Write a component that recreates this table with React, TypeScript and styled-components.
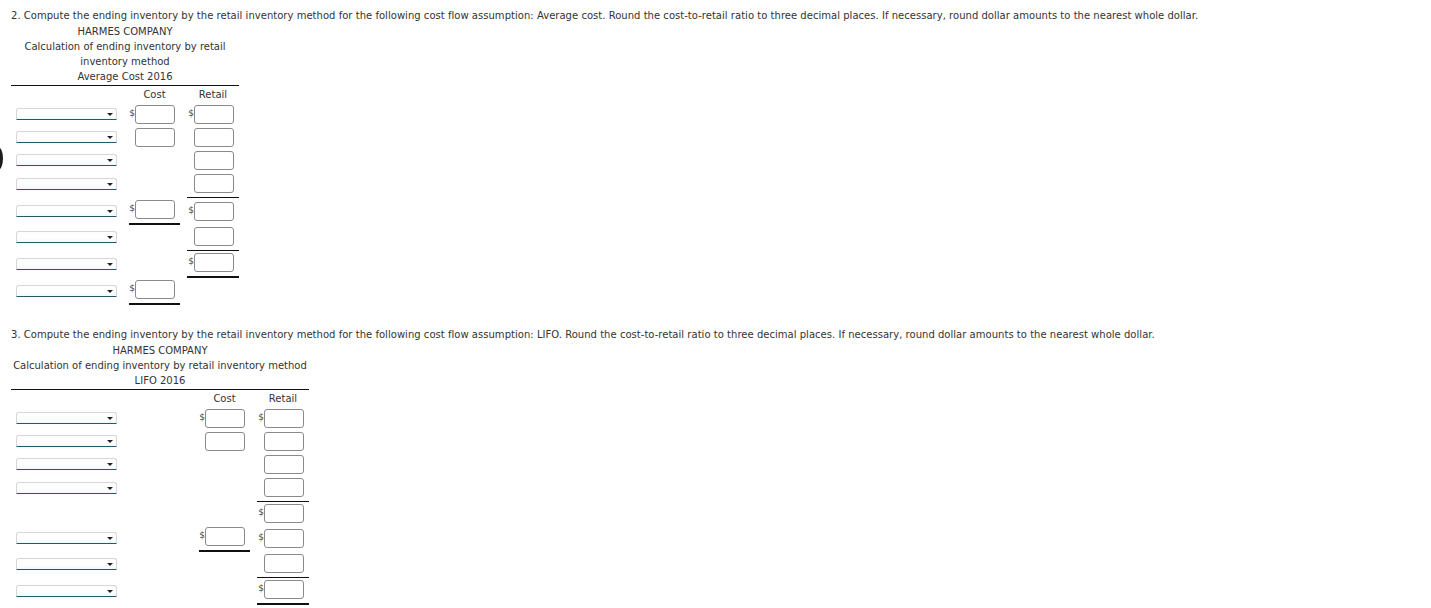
import React, { FC } from 'react';
import styled, { createGlobalStyle } from 'styled-components';

type Line = 'thin' | 'thick';
type CellSpec = { input?: boolean; dollar?: boolean; line?: Line };
type RowSpec = { select: boolean; cost: CellSpec; retail: CellSpec };
type SectionSpec = {
  question: string;
  title: string[];
  labelWidth: number;
  rows: RowSpec[];
};

const GlobalStyle = createGlobalStyle`
  html, body {
    margin: 0;
    padding: 0;
    background: #fff;
  }
  body {
    font-family: "DejaVu Sans", Verdana, sans-serif;
    font-size: 10px;
    color: #333;
  }
`;

const Page = styled.div`
  position: relative;
  padding: 8px 11px 0;
`;

const EdgeMark = styled.div`
  position: absolute;
  left: -7px;
  top: 147px;
  width: 10px;
  height: 23px;
  box-sizing: border-box;
  border: 3px solid #1c1c1c;
  border-radius: 50%;
`;

const Section = styled.section`
  & + & {
    margin-top: 22px;
  }
`;

const Question = styled.p`
  margin: 0 0 1px;
  line-height: 15px;
  white-space: nowrap;
  letter-spacing: 0.03px;
`;

const Sheet = styled.div<{ $label: number }>`
  display: inline-grid;
  grid-template-columns: ${(p) => p.$label}px 51px 52px;
  column-gap: 7px;
`;

const Title = styled.div`
  grid-column: 1 / -1;
  text-align: center;
  line-height: 15px;
  padding-bottom: 1px;
  border-bottom: 1px solid #111;
`;

const ColHead = styled.div`
  text-align: center;
  line-height: 15px;
  padding: 1px 0 1px;
`;

const LabelCell = styled.div`
  display: flex;
  align-items: center;
  padding: 0 0 2px 5px;
`;

const AmountCell = styled.div<{ $line?: Line }>`
  display: flex;
  justify-content: flex-end;
  align-items: center;
  padding: 2px 5px ${(p) => (p.$line ? '4px' : '2px')} 0;
  min-height: 19px;
  border-bottom: ${(p) =>
    p.$line === 'thick' ? '2px solid #111' : p.$line === 'thin' ? '1px solid #111' : 'none'};
`;

const Dropdown = styled.div`
  position: relative;
  width: 101px;
  height: 12px;
  box-sizing: border-box;
  border: 1px solid #d6d6d6;
  border-bottom: 1px solid #24586a;
  border-radius: 3px 3px 0 0;
  background: linear-gradient(#fff 55%, #f1fbfd);
  &::after {
    content: '';
    position: absolute;
    right: 3px;
    top: 4px;
    border-left: 3px solid transparent;
    border-right: 3px solid transparent;
    border-top: 3px solid #222;
  }
`;

const Dollar = styled.span`
  font-size: 9px;
  line-height: 10px;
  color: #444;
  margin-top: -3px;
`;

const Amount = styled.input`
  width: 40px;
  height: 19px;
  box-sizing: border-box;
  margin: 0;
  padding: 0 3px;
  border: 1px solid #8a8a8a;
  border-radius: 3px;
  background: #fff;
  font: inherit;
`;

const Amt: FC<{ spec: CellSpec }> = ({ spec }) => (
  <AmountCell $line={spec.line}>
    {spec.dollar && <Dollar>$</Dollar>}
    {spec.input && <Amount type="text" />}
  </AmountCell>
);

const sections: SectionSpec[] = [
  {
    question:
      '2. Compute the ending inventory by the retail inventory method for the following cost flow assumption: Average cost. Round the cost-to-retail ratio to three decimal places. If necessary, round dollar amounts to the nearest whole dollar.',
    title: ['HARMES COMPANY', 'Calculation of ending inventory by retail', 'inventory method', 'Average Cost 2016'],
    labelWidth: 111,
    rows: [
      { select: true, cost: { input: true, dollar: true }, retail: { input: true, dollar: true } },
      { select: true, cost: { input: true }, retail: { input: true } },
      { select: true, cost: {}, retail: { input: true } },
      { select: true, cost: {}, retail: { input: true, line: 'thin' } },
      { select: true, cost: { input: true, dollar: true, line: 'thick' }, retail: { input: true, dollar: true } },
      { select: true, cost: {}, retail: { input: true, line: 'thin' } },
      { select: true, cost: {}, retail: { input: true, dollar: true, line: 'thick' } },
      { select: true, cost: { input: true, dollar: true, line: 'thick' }, retail: {} },
    ],
  },
  {
    question:
      '3. Compute the ending inventory by the retail inventory method for the following cost flow assumption: LIFO. Round the cost-to-retail ratio to three decimal places. If necessary, round dollar amounts to the nearest whole dollar.',
    title: ['HARMES COMPANY', 'Calculation of ending inventory by retail inventory method', 'LIFO 2016'],
    labelWidth: 181,
    rows: [
      { select: true, cost: { input: true, dollar: true }, retail: { input: true, dollar: true } },
      { select: true, cost: { input: true }, retail: { input: true } },
      { select: true, cost: {}, retail: { input: true } },
      { select: true, cost: {}, retail: { input: true, line: 'thin' } },
      { select: false, cost: {}, retail: { input: true, dollar: true } },
      { select: true, cost: { input: true, dollar: true, line: 'thick' }, retail: { input: true, dollar: true } },
      { select: true, cost: {}, retail: { input: true, line: 'thin' } },
      { select: true, cost: {}, retail: { input: true, dollar: true, line: 'thick' } },
    ],
  },
];

const App: FC = () => (
  <Page>
    <GlobalStyle />
    <EdgeMark />
    {sections.map((section) => (
      <Section key={section.question}>
        <Question>{section.question}</Question>
        <Sheet $label={section.labelWidth}>
          <Title>
            {section.title.map((line) => (
              <div key={line}>{line}</div>
            ))}
          </Title>
          <div />
          <ColHead>Cost</ColHead>
          <ColHead>Retail</ColHead>
          {section.rows.map((row, i) => (
            <React.Fragment key={i}>
              <LabelCell>{row.select && <Dropdown />}</LabelCell>
              <Amt spec={row.cost} />
              <Amt spec={row.retail} />
            </React.Fragment>
          ))}
        </Sheet>
      </Section>
    ))}
  </Page>
);

export default App;
